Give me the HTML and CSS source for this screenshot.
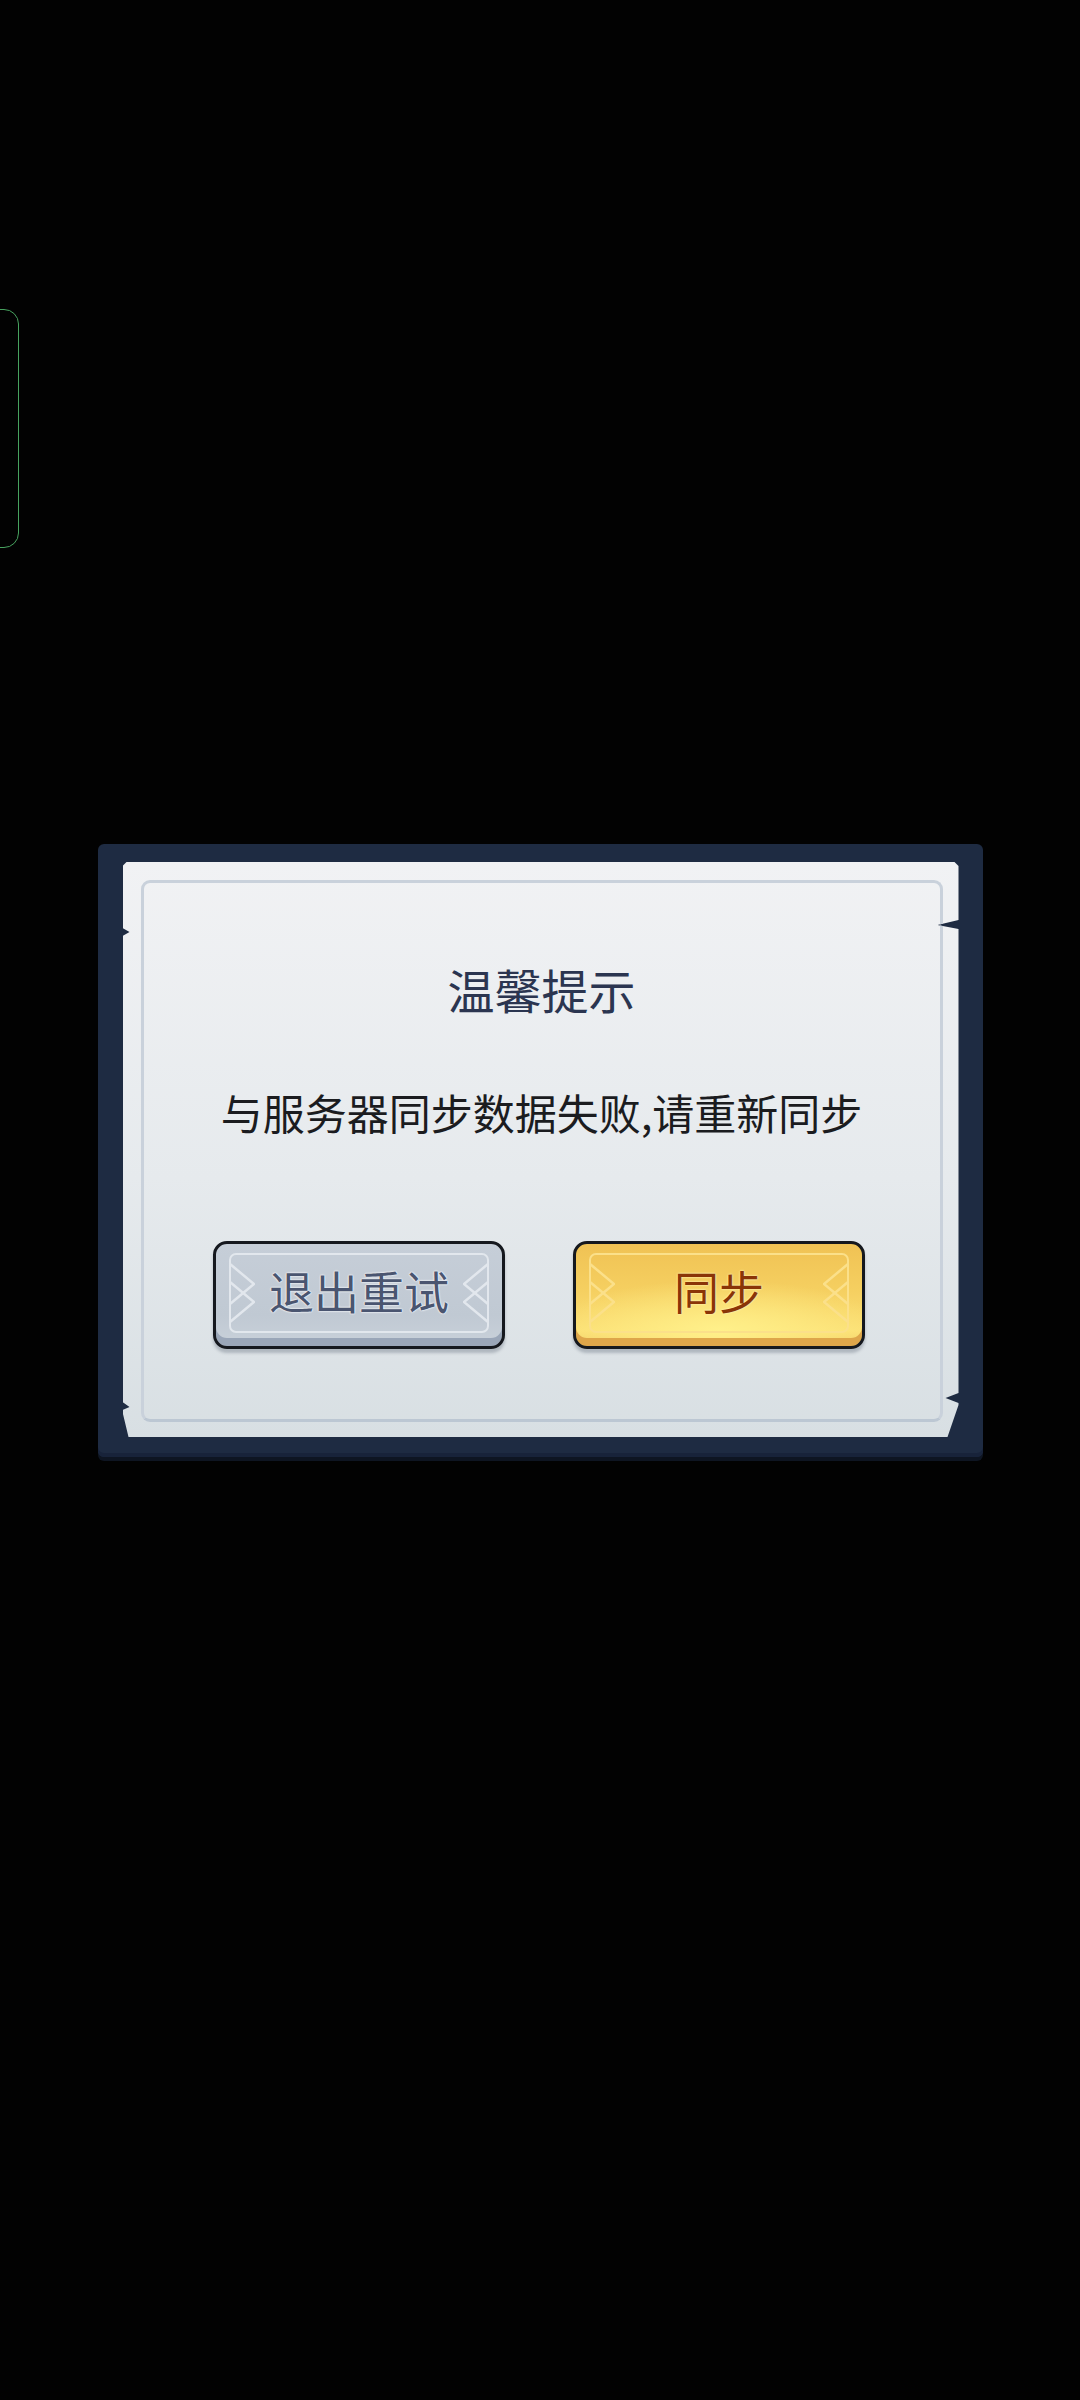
FILE: index.html
```html
<!DOCTYPE html>
<html lang="zh-CN">
<head>
    <meta charset="UTF-8">
    <meta name="viewport" content="width=device-width, initial-scale=1.0">
    <title>温馨提示</title>
    <link rel="stylesheet" href="styles.css">
</head>
<body>

<div class="edge-tab"></div>

<div class="dialog">
    <div class="paper">
        <div class="paper-inner">
            <h2 class="title">温馨提示</h2>
            <p class="message">与服务器同步数据失败,请重新同步</p>

            <div class="actions">
                <button class="btn btn-gray">
                    <span class="btn-face">
                        <svg class="chev" viewBox="0 0 26 60"><polyline points="1,1 25,21 1,41"/><polyline points="1,19 25,39 1,59"/></svg>
                        <span class="btn-label">退出重试</span>
                        <svg class="chev flip" viewBox="0 0 26 60"><polyline points="1,1 25,21 1,41"/><polyline points="1,19 25,39 1,59"/></svg>
                    </span>
                </button>
                <button class="btn btn-gold">
                    <span class="btn-face">
                        <svg class="chev" viewBox="0 0 26 60"><polyline points="1,1 25,21 1,41"/><polyline points="1,19 25,39 1,59"/></svg>
                        <span class="btn-label">同步</span>
                        <svg class="chev flip" viewBox="0 0 26 60"><polyline points="1,1 25,21 1,41"/><polyline points="1,19 25,39 1,59"/></svg>
                    </span>
                </button>
            </div>
        </div>
    </div>
</div>

</body>
</html>
```

FILE: styles.css
```css
body {
    margin: 0;
    padding: 0;
    height: 2400px;
    background-color: #020202;
    display: flex;
    flex-direction: column;
    font-family: "Noto Sans CJK SC", "Noto Sans", sans-serif;
    overflow: hidden;
}

/* floating side tab peeking in from the left edge */
.edge-tab {
    margin-top: 309px;
    margin-left: -20px;
    width: 37px;
    height: 237px;
    border: 1px solid #47a25f;
    border-radius: 15px;
}

.dialog {
    align-self: center;
    margin-top: 296px;
    width: 885px;
    box-sizing: border-box;
    padding: 18px 24px 20px 25px;
    background-color: #1e2b42;
    border-radius: 6px;
    box-shadow: inset 0 -4px 0 #18233a, 0 4px 0 #0e1522;
}

.paper {
    height: 575px;
    box-sizing: border-box;
    padding: 18px 16px 15px 18px;
    background: linear-gradient(#f1f2f4, #e6eaed 55%, #d8dfe3);
    clip-path: polygon(
        4px 0, 832px 0, 836px 4px,
        836px 58px, 815px 63px, 836px 67px,
        836px 531px, 823px 536px, 836px 541px,
        836px 543px, 825px 575px,
        6px 575px, 0 550px,
        0 548px, 7px 545px, 0 540px,
        0 74px, 7px 70px, 0 66px,
        0 4px
    );
}

.paper-inner {
    height: 100%;
    box-sizing: border-box;
    border: 3px solid #c9d1db;
    border-bottom-color: #bcc7d3;
    border-radius: 9px;
    padding-top: 78px;
    display: flex;
    flex-direction: column;
    align-items: center;
}

.title {
    margin: 0;
    font-size: 47px;
    line-height: 56px;
    font-weight: normal;
    color: #2b3550;
}

.message {
    margin: 67px 0 0 0;
    font-size: 42px;
    line-height: 56px;
    color: #1b1c1f;
}

.actions {
    margin-top: 101px;
    margin-right: 5px;
    display: flex;
    gap: 68px;
}

.btn {
    width: 292px;
    height: 108px;
    box-sizing: border-box;
    padding: 9px 13px 13px 13px;
    border: 3px solid #15181e;
    border-radius: 14px;
    font-family: inherit;
    display: flex;
}

.btn-face {
    flex: 1;
    border: 2px solid;
    border-radius: 7px;
    display: flex;
    align-items: center;
    justify-content: space-between;
}

.chev {
    width: 26px;
    height: 60px;
    margin: 0 -2px;
    fill: none;
    stroke-width: 2.5;
}
.chev.flip {
    transform: scaleX(-1);
}

.btn-label {
    font-size: 45px;
    line-height: 56px;
    margin-top: -4px;
}

.btn-gray {
    background: linear-gradient(#c6ced8, #c0c9d3 70%, #c9d1da);
    box-shadow: inset 0 -8px 0 #9aa6b8, 0 4px 3px rgba(40, 50, 70, 0.25);
}
.btn-gray .btn-face {
    border-color: #e2e7ed;
}
.btn-gray .chev {
    stroke: #e2e7ed;
}
.btn-gray .btn-label {
    color: #4a5570;
    text-shadow: 0 0 2px #f4f6f9, 0 0 2px #f4f6f9, 0 0 1px #ffffff;
}

.btn-gold {
    background:
        radial-gradient(ellipse 60% 50% at 50% 85%, #fff08a, rgba(255, 240, 138, 0)),
        linear-gradient(#f0c254, #f5cf60 45%, #fbdf74 85%, #f2cc62);
    box-shadow: inset 0 -8px 0 #dea64a, 0 4px 3px rgba(40, 50, 70, 0.25);
}
.btn-gold .btn-face {
    border-color: #fbe08a;
}
.btn-gold .chev {
    stroke: #fbe08a;
}
.btn-gold .btn-label {
    color: #8a3507;
    text-shadow: 0 0 2px #fff0b0, 0 0 2px #fff0b0;
}
```
